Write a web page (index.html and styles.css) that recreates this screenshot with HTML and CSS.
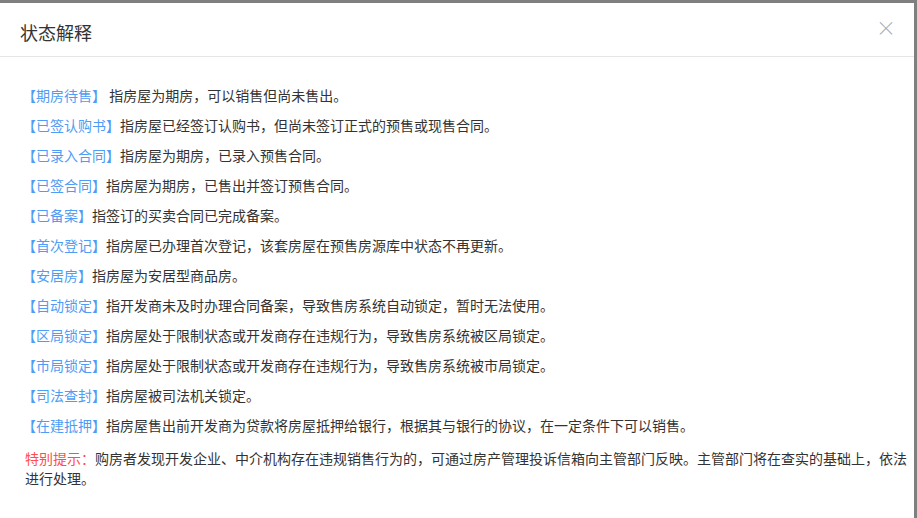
FILE: index.html
```html
<!DOCTYPE html>
<html lang="zh-CN">
<head>
  <meta charset="UTF-8">
  <title>状态解释</title>
  <link rel="stylesheet" href="styles.css">
</head>
<body>
  <div class="dialog">
    <div class="dialog-header">
      <h3>状态解释</h3>
      <span class="close">&#215;</span>
    </div>
    <div class="dialog-body">
      <p><span class="tag">【期房待售】</span> 指房屋为期房，可以销售但尚未售出。</p>
      <p><span class="tag">【已签认购书】</span>指房屋已经签订认购书，但尚未签订正式的预售或现售合同。</p>
      <p><span class="tag">【已录入合同】</span>指房屋为期房，已录入预售合同。</p>
      <p><span class="tag">【已签合同】</span>指房屋为期房，已售出并签订预售合同。</p>
      <p><span class="tag">【已备案】</span>指签订的买卖合同已完成备案。</p>
      <p><span class="tag">【首次登记】</span>指房屋已办理首次登记，该套房屋在预售房源库中状态不再更新。</p>
      <p><span class="tag">【安居房】</span>指房屋为安居型商品房。</p>
      <p><span class="tag">【自动锁定】</span>指开发商未及时办理合同备案，导致售房系统自动锁定，暂时无法使用。</p>
      <p><span class="tag">【区局锁定】</span>指房屋处于限制状态或开发商存在违规行为，导致售房系统被区局锁定。</p>
      <p><span class="tag">【市局锁定】</span>指房屋处于限制状态或开发商存在违规行为，导致售房系统被市局锁定。</p>
      <p><span class="tag">【司法查封】</span>指房屋被司法机关锁定。</p>
      <p><span class="tag">【在建抵押】</span>指房屋售出前开发商为贷款将房屋抵押给银行，根据其与银行的协议，在一定条件下可以销售。</p>
      <p class="notice"><span class="warn">特别提示：</span>购房者发现开发企业、中介机构存在违规销售行为的，可通过房产管理投诉信箱向主管部门反映。主管部门将在查实的基础上，依法进行处理。</p>
    </div>
  </div>
</body>
</html>
```

FILE: styles.css
```css
* {
  margin: 0;
  padding: 0;
  box-sizing: border-box;
}

body {
  font-family: "Noto Sans CJK SC", "Noto Sans", sans-serif;
  background: #7f7f7f;
  width: 917px;
  height: 518px;
  overflow: hidden;
  padding-top: 3px;
}

.dialog {
  width: 914px;
  height: 515px;
  background: #fff;
}

.dialog-header {
  height: 54px;
  border-bottom: 1px solid #e5e5e5;
  display: flex;
  align-items: center;
  justify-content: space-between;
  padding: 4px 18px 0 20px;
}

.dialog-header h3 {
  font-size: 18px;
  font-weight: normal;
  color: #333;
}

.close {
  font-size: 20px;
  color: #aaa;
  font-weight: 300;
  line-height: 1;
  margin-top: -8px;
}

.dialog-body {
  padding: 28px 0 0 22px;
  color: #333;
  font-size: 14px;
}

.dialog-body p {
  line-height: 20px;
  margin-bottom: 10px;
}

.tag {
  color: #4e9cf5;
}

.notice {
  margin-top: 13px;
  padding-left: 3px;
}

.warn {
  color: #ff4d4d;
}
```
